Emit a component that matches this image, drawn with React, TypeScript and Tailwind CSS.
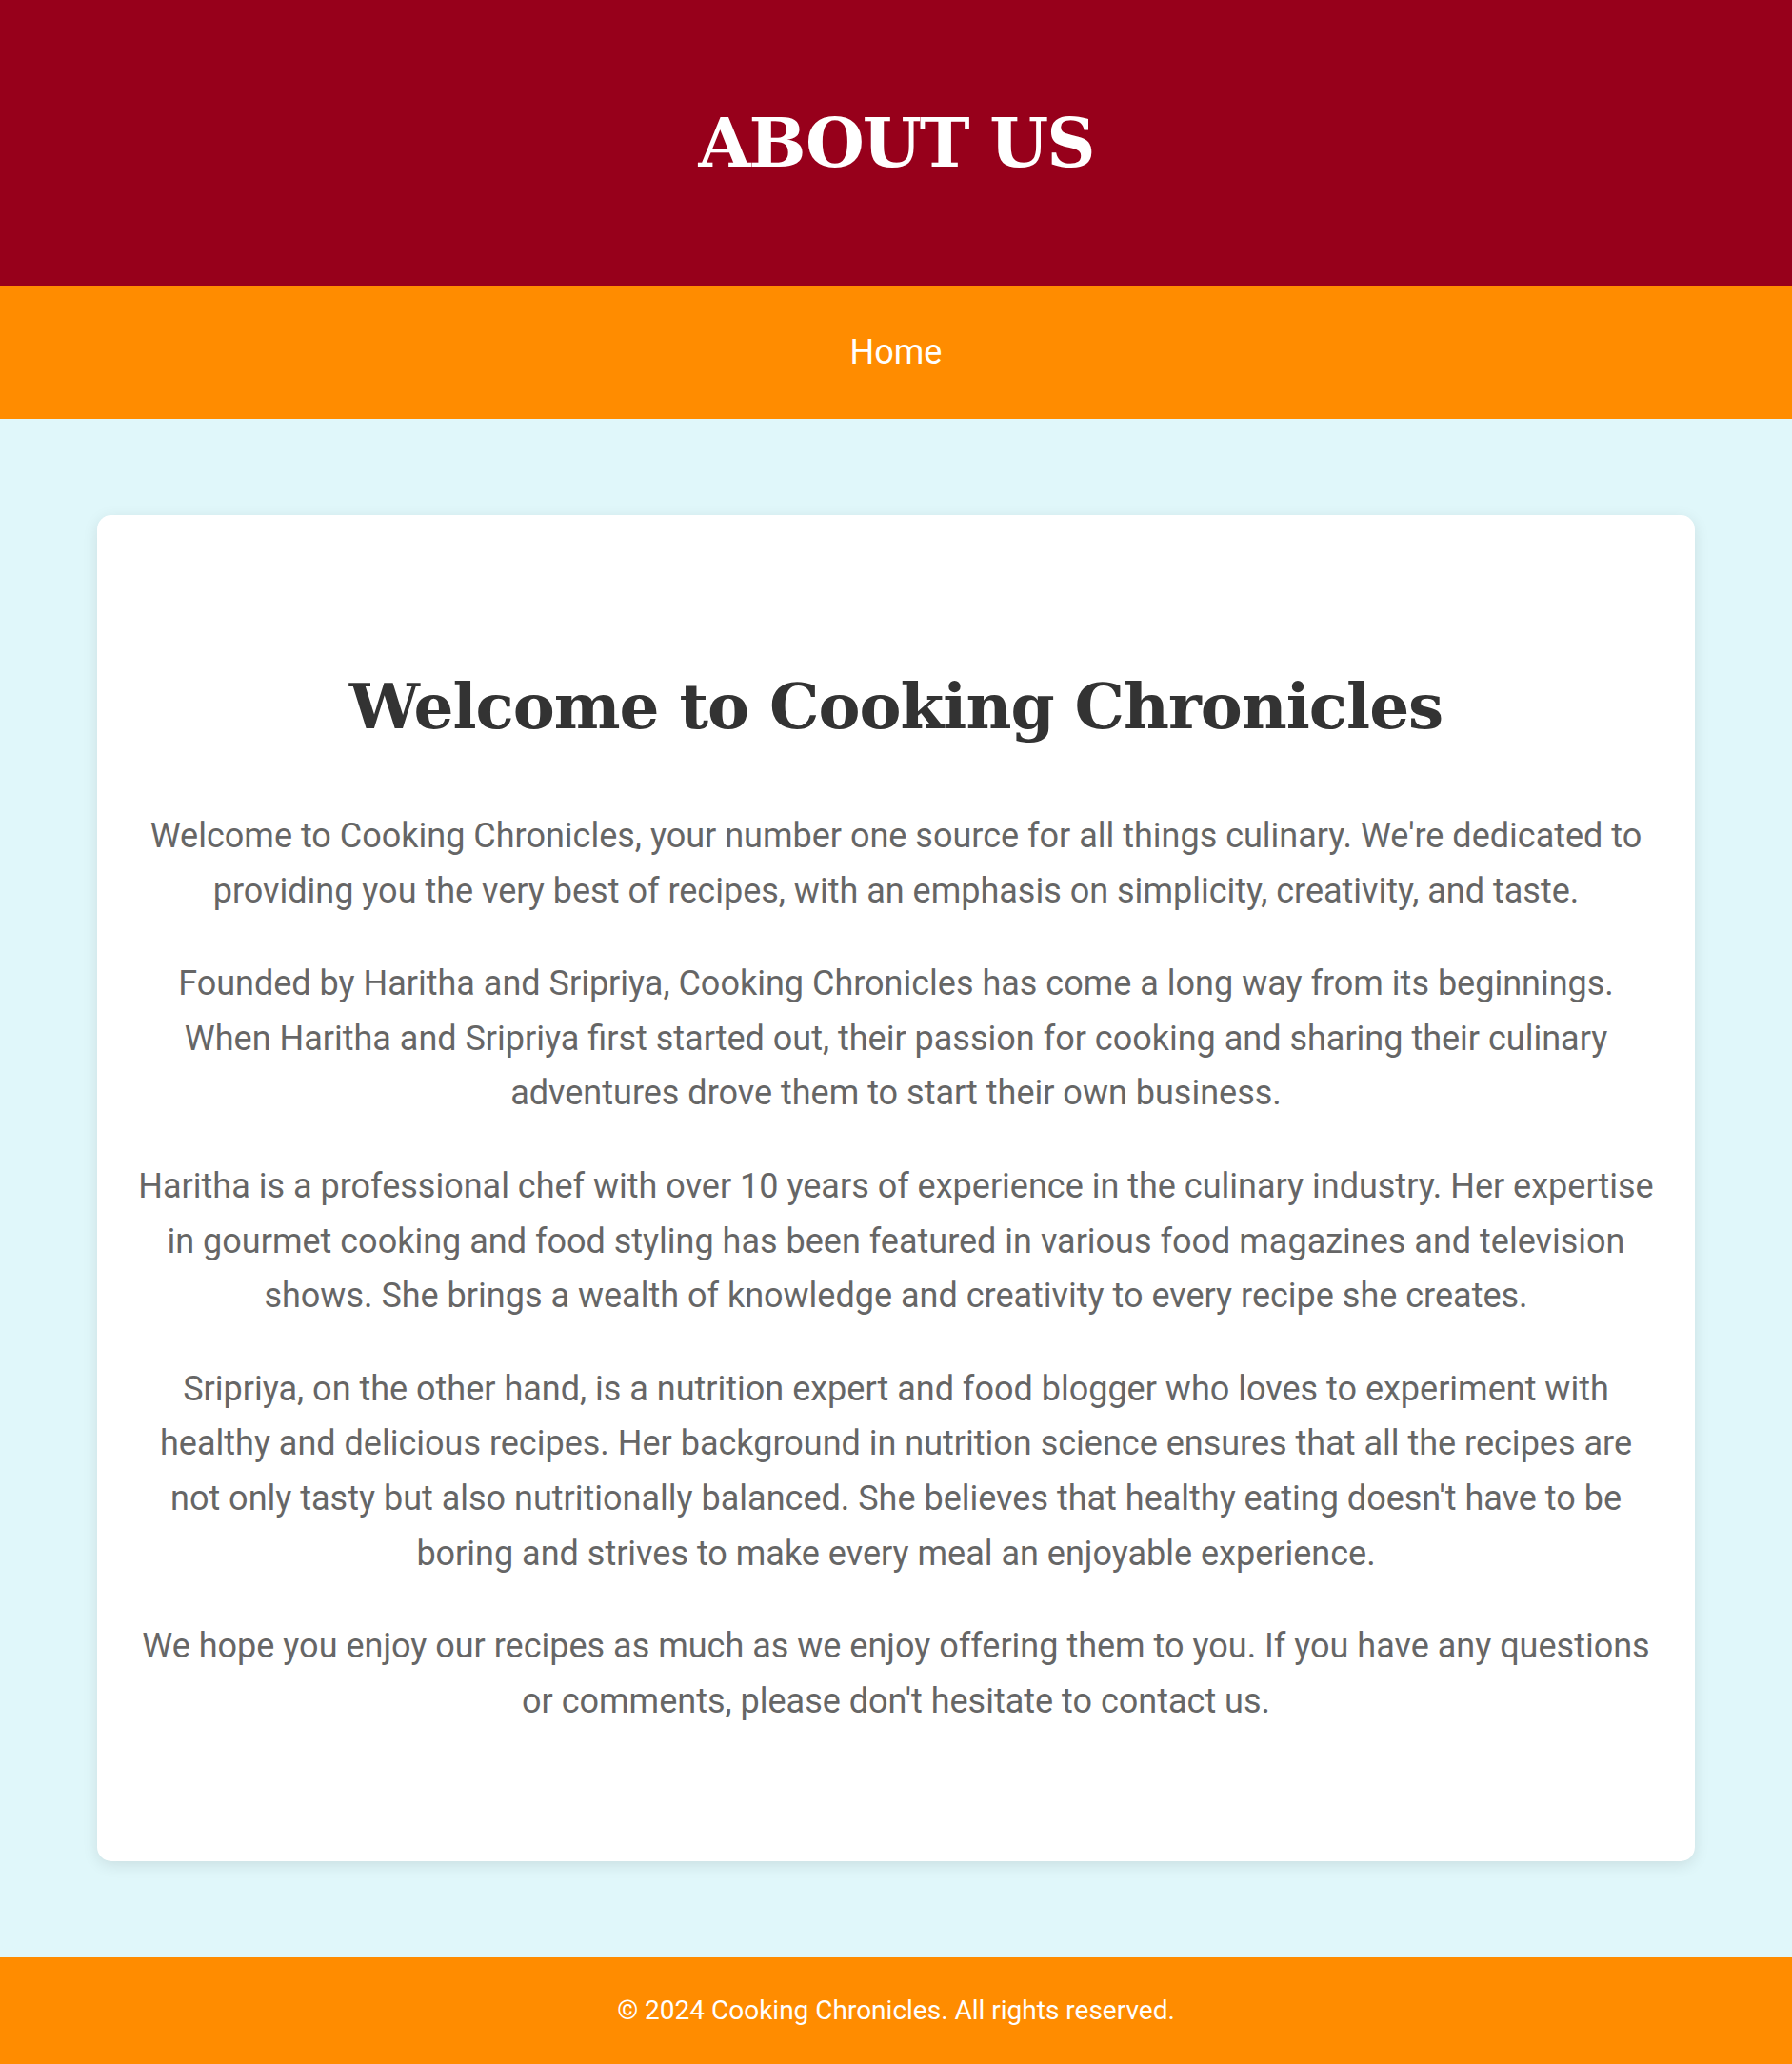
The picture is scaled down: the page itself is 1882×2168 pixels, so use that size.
export default function App() {
  const paragraphs = [
    "Welcome to Cooking Chronicles, your number one source for all things culinary. We're dedicated to providing you the very best of recipes, with an emphasis on simplicity, creativity, and taste.",
    "Founded by Haritha and Sripriya, Cooking Chronicles has come a long way from its beginnings. When Haritha and Sripriya first started out, their passion for cooking and sharing their culinary adventures drove them to start their own business.",
    "Haritha is a professional chef with over 10 years of experience in the culinary industry. Her expertise in gourmet cooking and food styling has been featured in various food magazines and television shows. She brings a wealth of knowledge and creativity to every recipe she creates.",
    "Sripriya, on the other hand, is a nutrition expert and food blogger who loves to experiment with healthy and delicious recipes. Her background in nutrition science ensures that all the recipes are not only tasty but also nutritionally balanced. She believes that healthy eating doesn't have to be boring and strives to make every meal an enjoyable experience.",
    "We hope you enjoy our recipes as much as we enjoy offering them to you. If you have any questions or comments, please don't hesitate to contact us.",
  ];

  return (
    <div className="min-h-screen bg-[#e0f7fa] font-['Roboto',sans-serif]">
      {/* header */}
      <header className="h-[300px] bg-[#97001b] flex items-center justify-center">
        <h1 className="font-['DejaVu_Serif',serif] font-bold text-white text-[71px] tracking-[-2px] leading-none">
          ABOUT US
        </h1>
      </header>

      <nav className="h-[140px] bg-[#ff8c00] flex items-center justify-center">
        <a href="#" className="text-white text-[36px]">
          Home
        </a>
      </nav>

      <main className="px-[102px] py-[101px]">
        <div className="bg-white rounded-[15px] shadow-[0_4px_16px_rgba(0,0,0,0.1)] px-[40px] pt-[168px] pb-[139px] text-center">
          <h2 className="font-['DejaVu_Serif',serif] font-bold text-[#333] text-[66px] tracking-[-1px] leading-none mb-[75px]">
            Welcome to Cooking Chronicles
          </h2>
          {paragraphs.map((p, i) => (
            <p
              key={i}
              className="text-[#666] text-[36px] leading-[57.6px] mb-[40px] last:mb-0"
            >
              {p}
            </p>
          ))}
        </div>
      </main>

      <footer className="h-[112px] bg-[#ff8c00] flex items-center justify-center">
        <p className="text-white text-[28px]">
          © 2024 Cooking Chronicles. All rights reserved.
        </p>
      </footer>
    </div>
  );
}
